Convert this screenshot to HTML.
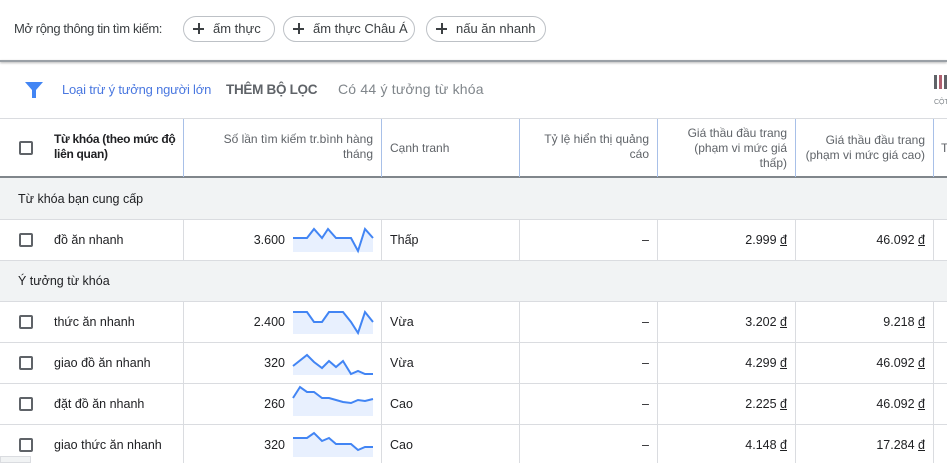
<!DOCTYPE html>
<html><head><meta charset="utf-8"><style>
*{box-sizing:border-box;margin:0;padding:0}
body{width:947px;height:463px;overflow:hidden;background:#fff;font-family:"Liberation Sans",sans-serif;color:#202124;position:relative;font-size:13px}
.a{position:absolute;white-space:nowrap}
.chip{position:absolute;top:16px;height:26px;border:1px solid #bdc1c6;border-radius:13px;font-size:13px;color:#3c4043;line-height:24px;padding-left:29px;white-space:nowrap}
.chip:before{content:"";position:absolute;left:9px;top:11px;width:11px;height:2px;background:#3c4043}
.chip:after{content:"";position:absolute;left:14px;top:6px;width:2px;height:11px;background:#3c4043}
.cb{position:absolute;left:19px;width:14px;height:14px;border:2px solid #5f6368;border-radius:2px}
.hl{position:absolute;left:0;width:947px;height:1px;background:#dadce0}
.vl{position:absolute;width:1px;background:#dadce0}
.hv{position:absolute;width:1px;background:#a8c0e8;top:119px;height:58px}
.h{position:absolute;font-size:12px;color:#5f6368;line-height:15px;white-space:nowrap}
.t{position:absolute;font-size:12.5px;line-height:16px;white-space:nowrap}
.r{text-align:right}
.grp{position:absolute;left:0;width:947px;height:41px;background:#f1f3f4}
u{text-decoration:underline}
</style></head><body>
<div class="a" style="left:14px;top:21px;font-size:13px;color:#3c4043;letter-spacing:-0.4px">Mở rộng thông tin tìm kiếm:</div>
<div class="chip" style="left:183px;width:92px">ấm thực</div>
<div class="chip" style="left:283px;width:132px">ấm thực Châu Á</div>
<div class="chip" style="left:426px;width:120px">nấu ăn nhanh</div>
<div class="a" style="left:0;top:60px;width:947px;height:2px;background:#9aa0a6;box-shadow:0 1px 2px rgba(0,0,0,.3)"></div>
<svg class="a" style="left:25px;top:82px" width="18" height="16"><path d="M0 0H18L11 8V16H7V8Z" fill="#4285f4"/></svg>
<div class="a" style="left:62px;top:82px;font-size:13px;color:#4a78e0;letter-spacing:-0.2px">Loại trừ ý tưởng người lớn</div>
<div class="a" style="left:226px;top:82px;font-size:13.5px;color:#5f6368;font-weight:bold;letter-spacing:-0.3px">THÊM BỘ LỌC</div>
<div class="a" style="left:338px;top:81px;font-size:14px;color:#80868b;letter-spacing:0.2px">Có 44 ý tưởng từ khóa</div>
<div class="a" style="left:934px;top:75px;width:3px;height:14px;background:#5f6368"></div>
<div class="a" style="left:939px;top:75px;width:3px;height:14px;background:#b06070"></div>
<div class="a" style="left:944px;top:75px;width:3px;height:14px;background:#5f6368"></div>
<div class="a" style="left:934px;top:99px;font-size:7px;color:#80868b">CỘT</div>

<div class="hl" style="top:118px"></div>
<div class="a" style="left:0;top:176px;width:947px;height:2px;background:#80868b"></div>
<div class="hv" style="left:183px"></div><div class="hv" style="left:381px"></div><div class="hv" style="left:519px"></div><div class="hv" style="left:657px"></div><div class="hv" style="left:795px"></div><div class="hv" style="left:933px"></div>
<div class="cb" style="top:141px"></div>
<div class="h" style="left:54px;top:132px;color:#202124;font-weight:bold;letter-spacing:-0.3px">Từ khóa (theo mức độ<br>liên quan)</div>
<div class="h r" style="left:190px;top:132px;width:183px">Số lần tìm kiếm tr.bình hàng<br>tháng</div>
<div class="h" style="left:390px;top:141px">Cạnh tranh</div>
<div class="h r" style="left:525px;top:132px;width:124px">Tỷ lệ hiển thị quảng<br>cáo</div>
<div class="h r" style="left:662px;top:126px;width:125px">Giá thầu đầu trang<br>(phạm vi mức giá<br>thấp)</div>
<div class="h r" style="left:800px;top:133px;width:125px">Giá thầu đầu trang<br>(phạm vi mức giá cao)</div>
<div class="h" style="left:941px;top:141px">T</div>

<div class="grp" style="top:178px"></div>
<div class="t" style="left:18px;top:191px">Từ khóa bạn cung cấp</div>
<div class="hl" style="top:219px"></div>
<div class="grp" style="top:260px"></div>
<div class="hl" style="top:260px"></div>
<div class="t" style="left:18px;top:273px">Ý tưởng từ khóa</div>
<div class="hl" style="top:301px"></div>
<div class="hl" style="top:342px"></div>
<div class="hl" style="top:383px"></div>
<div class="hl" style="top:424px"></div>
<div class="vl" style="left:183px;top:220px;height:40px"></div><div class="vl" style="left:381px;top:220px;height:40px"></div><div class="vl" style="left:519px;top:220px;height:40px"></div><div class="vl" style="left:657px;top:220px;height:40px"></div><div class="vl" style="left:795px;top:220px;height:40px"></div><div class="vl" style="left:933px;top:220px;height:40px"></div>
<div class="vl" style="left:183px;top:302px;height:161px"></div><div class="vl" style="left:381px;top:302px;height:161px"></div><div class="vl" style="left:519px;top:302px;height:161px"></div><div class="vl" style="left:657px;top:302px;height:161px"></div><div class="vl" style="left:795px;top:302px;height:161px"></div><div class="vl" style="left:933px;top:302px;height:161px"></div>

<svg class="a" style="left:0;top:0" width="947" height="463">
<g fill="#e8f0fe" stroke="none">
<path d="M293 238L307 238L314 229L322 238L328 229L336 238L351 238L358 251L365 229L373 238V252H293Z"/>
<path d="M293 312L307 312L314 322L322 322L329 312L343 312L351 322L358 333L365 312L373 322V334H293Z"/>
<path d="M293 366L307 355L314 362L322 368L329 361L336 367L343 361L351 374L358 371L365 374L373 374V375H293Z"/>
<path d="M293 398L300 387L307 392L314 392L322 398L329 398L336 400L343 402L351 403L358 400L365 401L373 399V416H293Z"/>
<path d="M293 438L307 438L314 433L322 441L329 438L336 444L351 444L358 450L365 447L373 447V457H293Z"/>
</g>
<g fill="none" stroke="#4285f4" stroke-width="2">
<path d="M293 238L307 238L314 229L322 238L328 229L336 238L351 238L358 251L365 229L373 238"/>
<path d="M293 312L307 312L314 322L322 322L329 312L343 312L351 322L358 333L365 312L373 322"/>
<path d="M293 366L307 355L314 362L322 368L329 361L336 367L343 361L351 374L358 371L365 374L373 374"/>
<path d="M293 398L300 387L307 392L314 392L322 398L329 398L336 400L343 402L351 403L358 400L365 401L373 399"/>
<path d="M293 438L307 438L314 433L322 441L329 438L336 444L351 444L358 450L365 447L373 447"/>
</g></svg>

<div class="cb" style="top:233px"></div><div class="t" style="left:54px;top:232px">đồ ăn nhanh</div><div class="t r" style="left:200px;top:232px;width:85px">3.600</div><div class="t" style="left:390px;top:232px">Thấp</div><div class="t r" style="left:560px;top:232px;width:89px">–</div><div class="t r" style="left:660px;top:232px;width:127px">2.999 <u>đ</u></div><div class="t r" style="left:800px;top:232px;width:125px">46.092 <u>đ</u></div>
<div class="cb" style="top:315px"></div><div class="t" style="left:54px;top:314px">thức ăn nhanh</div><div class="t r" style="left:200px;top:314px;width:85px">2.400</div><div class="t" style="left:390px;top:314px">Vừa</div><div class="t r" style="left:560px;top:314px;width:89px">–</div><div class="t r" style="left:660px;top:314px;width:127px">3.202 <u>đ</u></div><div class="t r" style="left:800px;top:314px;width:125px">9.218 <u>đ</u></div>
<div class="cb" style="top:356px"></div><div class="t" style="left:54px;top:355px">giao đồ ăn nhanh</div><div class="t r" style="left:200px;top:355px;width:85px">320</div><div class="t" style="left:390px;top:355px">Vừa</div><div class="t r" style="left:560px;top:355px;width:89px">–</div><div class="t r" style="left:660px;top:355px;width:127px">4.299 <u>đ</u></div><div class="t r" style="left:800px;top:355px;width:125px">46.092 <u>đ</u></div>
<div class="cb" style="top:397px"></div><div class="t" style="left:54px;top:396px">đặt đồ ăn nhanh</div><div class="t r" style="left:200px;top:396px;width:85px">260</div><div class="t" style="left:390px;top:396px">Cao</div><div class="t r" style="left:560px;top:396px;width:89px">–</div><div class="t r" style="left:660px;top:396px;width:127px">2.225 <u>đ</u></div><div class="t r" style="left:800px;top:396px;width:125px">46.092 <u>đ</u></div>
<div class="cb" style="top:438px"></div><div class="t" style="left:54px;top:437px">giao thức ăn nhanh</div><div class="t r" style="left:200px;top:437px;width:85px">320</div><div class="t" style="left:390px;top:437px">Cao</div><div class="t r" style="left:560px;top:437px;width:89px">–</div><div class="t r" style="left:660px;top:437px;width:127px">4.148 <u>đ</u></div><div class="t r" style="left:800px;top:437px;width:125px">17.284 <u>đ</u></div>
<div class="a" style="left:0;top:456px;width:31px;height:7px;background:#f1f3f4;border:1px solid #dadce0"></div>
</body></html>
